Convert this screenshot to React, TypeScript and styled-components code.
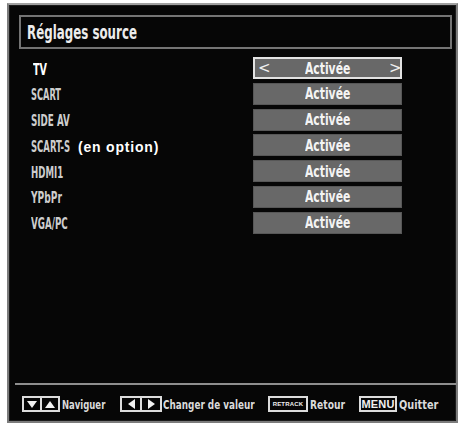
import React, { useLayoutEffect, useRef, useState } from "react";
import styled, { createGlobalStyle } from "styled-components";

const GlobalStyle = createGlobalStyle`
  html, body { margin: 0; padding: 0; background: #ffffff; }
  * { box-sizing: border-box; }
`;

const NARROW = `"DejaVu Sans Condensed", "DejaVu Sans", sans-serif`;

const FitBox = styled.span<{ $w: number }>`
  display: inline-block;
  width: ${(p) => p.$w}px;
  white-space: nowrap;
  overflow: visible;
  flex: none;
`;

const FitInner = styled.span`
  display: inline-block;
  white-space: nowrap;
  transform-origin: left center;
`;

function FitText({ w, children }: { w: number; children: React.ReactNode }) {
  const ref = useRef<HTMLSpanElement>(null);
  const [k, setK] = useState(1);
  useLayoutEffect(() => {
    const measure = () => {
      const el = ref.current;
      if (el && el.offsetWidth) setK(w / el.offsetWidth);
    };
    measure();
    if (document.fonts && document.fonts.ready) document.fonts.ready.then(measure);
  }, [w]);
  return (
    <FitBox $w={w}>
      <FitInner ref={ref} style={{ transform: `scaleX(${k})` }}>
        {children}
      </FitInner>
    </FitBox>
  );
}

const Screen = styled.div`
  margin: 3px 0 0 7px;
  width: 451px;
  height: 420px;
  background: #060606;
  border: 2px solid #7c7c7c;
  border-top-color: #a0a0a0;
  box-shadow: inset 0 0 0 1px #1c1c1c;
  display: flex;
  flex-direction: column;
  padding: 10px 4px 0 10px;
  font-family: ${NARROW};
`;

const TitleBox = styled.div`
  height: 34px;
  border: 2px solid #747474;
  display: flex;
  align-items: center;
  padding-left: 6px;
  color: #ececec;
  font-size: 20px;
  font-weight: 700;
`;

const List = styled.div`
  margin-top: 8px;
  display: flex;
  flex-direction: column;
  gap: 3.8px;
`;

const Row = styled.div`
  display: grid;
  grid-template-columns: 222px 149px;
  padding-left: 12px;
  height: 22px;
  align-items: center;
`;

const Label = styled.div<{ $active?: boolean }>`
  color: ${(p) => (p.$active ? "#ffffff" : "#cdcdcd")};
  font-size: ${(p) => (p.$active ? 16 : 15)}px;
  font-weight: 700;
  display: flex;
  align-items: center;
  padding-top: 3px;
  padding-left: ${(p) => (p.$active ? 2 : 0)}px;
  white-space: nowrap;
`;

const LabelSlot = styled.span`
  display: inline-block;
  width: 47px;
  flex: none;
`;

const Note = styled.span`
  font-family: "Liberation Sans", Arial, sans-serif;
  color: #ffffff;
  font-size: 14px;
  font-weight: 700;
  letter-spacing: 0.8px;
`;

const ValueBox = styled.div<{ $selected?: boolean }>`
  height: 22px;
  background: #686868;
  border: ${(p) => (p.$selected ? "2px solid #e2e2e2" : "1px solid #575757")};
  display: flex;
  align-items: center;
  justify-content: space-between;
  padding: 0 ${(p) => (p.$selected ? 3 : 4)}px;
  color: #f4f4f4;
  font-size: 16px;
  font-weight: 700;
`;

const Chevron = styled.span<{ $hidden?: boolean }>`
  visibility: ${(p) => (p.$hidden ? "hidden" : "visible")};
  font-family: "DejaVu Sans", sans-serif;
  font-size: 15px;
  font-weight: 400;
  color: #f0f0f0;
  width: 8px;
  text-align: center;
  line-height: 1;
`;

const Footer = styled.div`
  margin-top: auto;
  display: flex;
  flex-direction: column;
`;

const Separator = styled.div`
  height: 2px;
  background: #8e8e8e;
  margin: 0 -4px 0 -4px;
`;

const Legend = styled.div`
  height: 36px;
  display: flex;
  align-items: flex-start;
  padding: 11px 0 0 3px;
  color: #dadada;
  font-size: 12.5px;
  font-weight: 700;
`;

const Item = styled.div<{ $gap: number; $space: number }>`
  display: flex;
  align-items: center;
  gap: ${(p) => p.$space}px;
  height: 16px;
  margin-right: ${(p) => p.$gap}px;
`;

const KeyGroup = styled.div`
  display: flex;
  height: 16px;
  border: 2px solid #dcdcdc;
`;

const KeyCell = styled.div<{ $w: number; $divider?: boolean }>`
  width: ${(p) => p.$w}px;
  height: 100%;
  display: flex;
  align-items: center;
  justify-content: center;
  border-left: ${(p) => (p.$divider ? "2px solid #dcdcdc" : "none")};
`;

const KeyText = styled.div<{ $w: number; $size: number }>`
  width: ${(p) => p.$w}px;
  height: 16px;
  border: 2px solid #dcdcdc;
  display: flex;
  align-items: center;
  justify-content: center;
  font-family: "Liberation Sans", Arial, sans-serif;
  font-size: ${(p) => p.$size}px;
  font-weight: 700;
  color: #f0f0f0;
  letter-spacing: 0.2px;
`;

const Tri = ({ dir }: { dir: "up" | "down" | "left" | "right" }) => {
  const pts = {
    up: "0,8 5,1 10,8",
    down: "0,1 10,1 5,8",
    left: "8,0 8,10 1,5",
    right: "1,0 1,10 8,5",
  }[dir];
  const vertical = dir === "up" || dir === "down";
  return (
    <svg width={vertical ? 10 : 9} height={vertical ? 9 : 10} viewBox={vertical ? "0 0 10 9" : "0 0 9 10"}>
      <polygon points={pts} fill="#f2f2f2" />
    </svg>
  );
};

const sources: { name: string; w: number }[] = [
  { name: "TV", w: 14 },
  { name: "SCART", w: 30 },
  { name: "SIDE AV", w: 39 },
  { name: "SCART-S", w: 39 },
  { name: "HDMI1", w: 32 },
  { name: "YPbPr", w: 31 },
  { name: "VGA/PC", w: 37 },
];

export default function App() {
  return (
    <>
      <GlobalStyle />
      <Screen>
        <TitleBox>
          <FitText w={110}>Réglages source</FitText>
        </TitleBox>
        <List>
          {sources.map((s, i) => (
            <Row key={s.name}>
              <Label $active={i === 0}>
                <LabelSlot>
                  <FitText w={s.w}>{s.name}</FitText>
                </LabelSlot>
                {s.name === "SCART-S" && <Note>(en option)</Note>}
              </Label>
              <ValueBox $selected={i === 0}>
                <Chevron $hidden={i !== 0}>&lt;</Chevron>
                <FitText w={45}>Activée</FitText>
                <Chevron $hidden={i !== 0}>&gt;</Chevron>
              </ValueBox>
            </Row>
          ))}
        </List>
        <Footer>
          <Separator />
          <Legend>
            <Item $gap={15} $space={2}>
              <KeyGroup>
                <KeyCell $w={16}>
                  <Tri dir="down" />
                </KeyCell>
                <KeyCell $w={18} $divider>
                  <Tri dir="up" />
                </KeyCell>
              </KeyGroup>
              <FitText w={43}>Naviguer</FitText>
            </Item>
            <Item $gap={13} $space={1}>
              <KeyGroup>
                <KeyCell $w={18}>
                  <Tri dir="left" />
                </KeyCell>
                <KeyCell $w={20} $divider>
                  <Tri dir="right" />
                </KeyCell>
              </KeyGroup>
              <FitText w={92}>Changer de valeur</FitText>
            </Item>
            <Item $gap={14} $space={2}>
              <KeyText $w={40} $size={6}>RETRACK</KeyText>
              <FitText w={35}>Retour</FitText>
            </Item>
            <Item $gap={0} $space={2}>
              <KeyText $w={38} $size={11}>MENU</KeyText>
              <FitText w={39}>Quitter</FitText>
            </Item>
          </Legend>
        </Footer>
      </Screen>
    </>
  );
}
